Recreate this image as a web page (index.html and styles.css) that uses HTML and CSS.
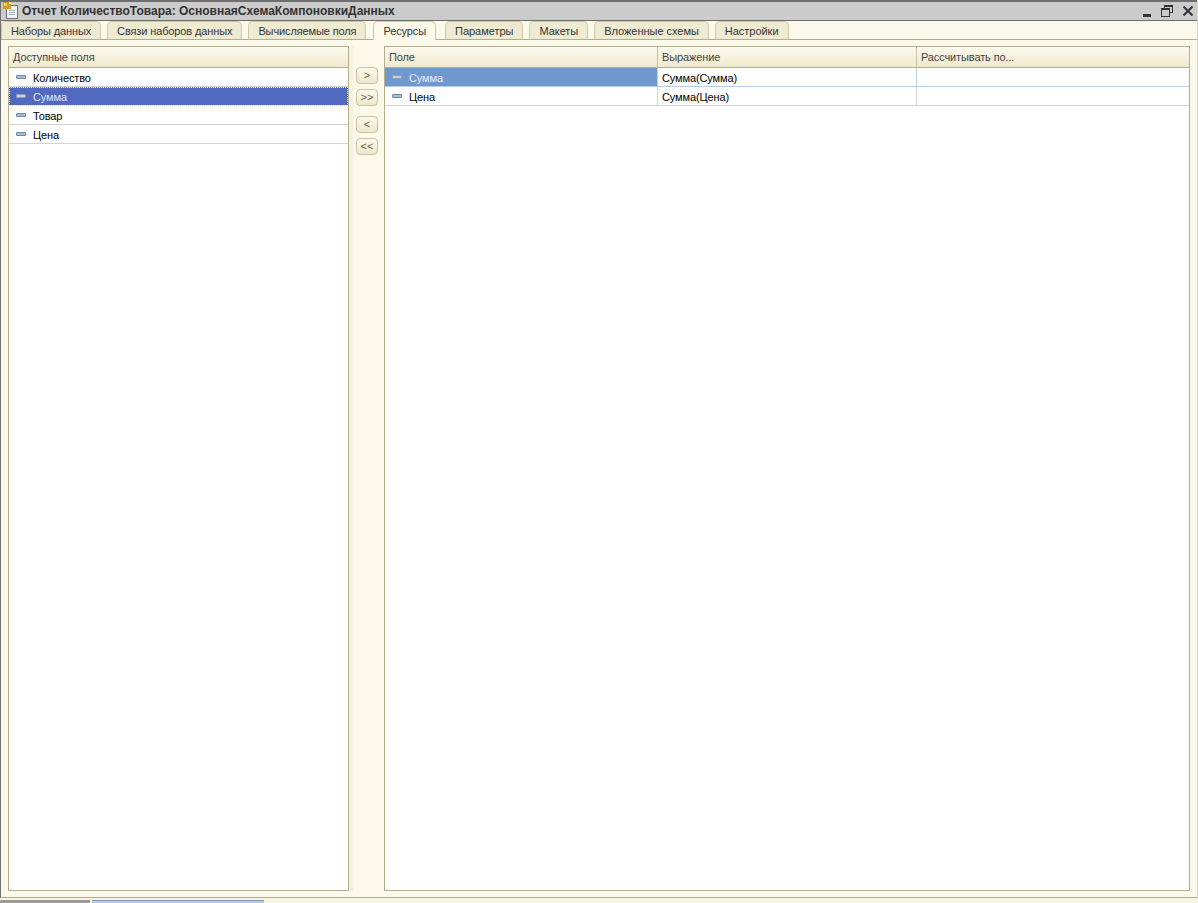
FILE: index.html
```html
<!DOCTYPE html>
<html lang="ru">
<head>
    <meta charset="UTF-8">
    <meta name="viewport" content="width=device-width, initial-scale=1.0">
    <title>Отчет КоличествоТовара</title>
    <link rel="stylesheet" href="styles.css">
</head>
<body>
    <div class="window">
        <div class="titlebar">
            <svg class="title-icon" width="18" height="18" viewBox="0 0 18 18">
                <rect x="4.500" y="3.500" width="11" height="13" fill="#eef3f8" stroke="#6b7480"/>
                <path d="M7 8.500h6M7 10.500h6M7 12.500h6" stroke="#a9b4c0"/>
                <rect x="1" y="0" width="8" height="7" fill="#d99a2b"/>
                <rect x="2" y="1" width="3" height="3" fill="#f4c95d"/>
                <rect x="7" y="0" width="2" height="2" fill="#fff6d8"/>
            </svg>
            <span class="title-text">Отчет КоличествоТовара: ОсновнаяСхемаКомпоновкиДанных</span>
            <div class="win-buttons">
                <svg width="8" height="11" viewBox="0 0 8 11"><rect x="0" y="8" width="8" height="3" fill="#333"/></svg>
                <svg width="12" height="12" viewBox="0 0 12 12" fill="none" stroke="#333">
                    <rect x="3.500" y="0.500" width="8" height="7"/>
                    <rect x="0.500" y="3.500" width="8" height="8" fill="#cbcbcb"/>
                    <path d="M1 4.500h7M4 1.500h7"/>
                </svg>
                <svg width="10" height="10" viewBox="0 0 10 10" fill="none" stroke="#333" stroke-width="2"><path d="M0.500 0.500l9 9M9.500 0.500l-9 9"/></svg>
            </div>
        </div>

        <div class="tabs">
            <div class="tab">Наборы данных</div>
            <div class="tab">Связи наборов данных</div>
            <div class="tab">Вычисляемые поля</div>
            <div class="tab active">Ресурсы</div>
            <div class="tab">Параметры</div>
            <div class="tab">Макеты</div>
            <div class="tab">Вложенные схемы</div>
            <div class="tab">Настройки</div>
        </div>

        <div class="content">
            <div class="panel fields-panel">
                <div class="head-row">
                    <div class="head-cell">Доступные поля</div>
                </div>
                <div class="row"><span class="cell field-cell"><i class="dash"></i>Количество</span></div>
                <div class="row current"><span class="cell field-cell"><i class="dash"></i>Сумма</span></div>
                <div class="row"><span class="cell field-cell"><i class="dash"></i>Товар</span></div>
                <div class="row"><span class="cell field-cell"><i class="dash"></i>Цена</span></div>
            </div>

            <div class="move-buttons">
                <button class="btn">&gt;</button>
                <button class="btn">&gt;&gt;</button>
                <button class="btn btn-gap">&lt;</button>
                <button class="btn">&lt;&lt;</button>
            </div>

            <div class="panel resources-panel">
                <div class="head-row cols">
                    <div class="head-cell">Поле</div>
                    <div class="head-cell">Выражение</div>
                    <div class="head-cell">Рассчитывать по...</div>
                </div>
                <div class="row cols first">
                    <span class="cell field-cell selected"><i class="dash"></i>Сумма</span>
                    <span class="cell">Сумма(Сумма)</span>
                    <span class="cell"></span>
                </div>
                <div class="row cols">
                    <span class="cell field-cell"><i class="dash"></i>Цена</span>
                    <span class="cell">Сумма(Цена)</span>
                    <span class="cell"></span>
                </div>
            </div>
        </div>
    </div>

    <div class="taskbar">
        <div class="task grey"></div>
        <div class="task blue"></div>
    </div>
</body>
</html>
```

FILE: styles.css
```css
* {
    box-sizing: border-box;
}
html, body {
    height: 100%;
}
body {
    margin: 0;
    display: flex;
    flex-direction: column;
    overflow: hidden;
    font-family: "Liberation Sans", Arial, sans-serif;
    font-size: 11px;
    letter-spacing: -0.12px;
    color: #000;
    background: #f5f3e1;
}
.window {
    height: 898px;
    display: flex;
    flex-direction: column;
    border-left: 1px solid #707070;
    border-right: 1px solid #d8d6c8;
    border-bottom: 1px solid #b5ae8c;
    background: #fbf9e9;
}
.titlebar {
    height: 21px;
    flex: none;
    display: flex;
    align-items: center;
    padding-left: 1px;
    background: #cbcbcb;
    border-top: 2px solid #6e6e6e;
    border-bottom: 1px solid #6e6e6e;
}
.title-icon {
    flex: none;
    margin-right: 2px;
}
.title-text {
    font-size: 12px;
    font-weight: bold;
    letter-spacing: 0;
    color: #333;
}
.win-buttons {
    margin-left: auto;
    display: flex;
    align-items: center;
    gap: 10px;
    padding-right: 4px;
}
.tabs {
    height: 19px;
    flex: none;
    display: flex;
    gap: 6px;
    background: #fbf9e9;
    border-bottom: 1px solid #b5ae8c;
}
.tab {
    height: 18px;
    padding: 3px 9px 0;
    background: #efebd2;
    border: 1px solid #cfc9a8;
    border-bottom: none;
    border-radius: 5px 5px 0 0;
    color: #333;
    white-space: nowrap;
}
.tab.active {
    height: 19px;
    margin-left: 1px;
    padding-top: 3px;
    background: #fbf9e9;
    border-color: #c9c3a2;
    border-top: 1px solid #e8c878;
    position: relative;
    z-index: 1;
}
.tab.active ~ .tab {
    letter-spacing: -0.03px;
}
.tab.active + .tab {
    margin-left: 3px;
}
.content {
    flex: 1;
    display: flex;
    padding: 6px 7px 6px 7px;
}
.panel {
    background: #fff;
    border: 1px solid #b5ae8c;
}
.fields-panel {
    width: 341px;
    flex: none;
}
.resources-panel {
    flex: 1;
}
.move-buttons {
    width: 35px;
    flex: none;
    display: flex;
    flex-direction: column;
    align-items: flex-start;
    gap: 5px;
    padding: 21px 0 0 7px;
    background: linear-gradient(to right, #f3f1df 0, #f3f1df 4px, #fbf9e9 5px);
}
.btn {
    width: 22px;
    height: 17px;
    padding: 0 0 2px;
    font-family: "Liberation Sans", Arial, sans-serif;
    font-size: 11px;
    color: #6a6040;
    background: linear-gradient(#fbf9ec, #ece7cd);
    border: 1px solid #c9c3a2;
    border-radius: 4px;
}
.btn-gap {
    margin-top: 5px;
}
.head-row {
    height: 21px;
    display: flex;
    background: linear-gradient(#fbf9ee, #f0e9cd);
    border-bottom: 1px solid #b5ae8c;
    color: #444;
}
.head-cell {
    padding: 4px 4px 0;
    border-right: 1px solid #c9c3a2;
    flex: 1;
}
.head-cell:last-child {
    border-right: none;
}
.row {
    height: 19px;
    display: flex;
    border-bottom: 1px solid #d4d4d4;
}
.cell {
    display: flex;
    align-items: center;
    padding: 2px 3px 0 4px;
    flex: 1;
    white-space: nowrap;
}
.field-cell {
    padding-left: 7px;
}
.dash {
    width: 10px;
    height: 4px;
    margin-right: 7px;
    margin-bottom: 3px;
    flex: none;
    background: #a5bdd4;
    border: 1px solid #6f8aa8;
    border-radius: 1px;
}
.row.current {
    background: #5169be;
    color: #dfe4f5;
    outline: 1px dotted #fff;
    outline-offset: -1px;
}
.row.current .dash,
.selected .dash {
    background: #c4cedc;
    border-color: #8ea0b8;
}
.cols > :nth-child(1) {
    flex: none;
    width: 273px;
}
.cols > :nth-child(2) {
    flex: none;
    width: 259px;
}
.cols .cell {
    border-right: 1px solid #d4d4d4;
}
.cols .cell:last-child {
    border-right: none;
}
.row.first {
    border-bottom-color: #b4cce6;
}
.row.first .cell {
    border-right-color: #b4cce6;
}
.selected {
    background: #6f98cf;
    color: #e6eef8;
}
.taskbar {
    flex: 1;
    display: flex;
    align-items: flex-end;
    gap: 2px;
}
.task {
    height: 3px;
}
.task.grey {
    width: 90px;
    background: #9a9a9a;
}
.task.blue {
    width: 172px;
    background: #b4cce6;
    border-top: 1px solid #7f9ab5;
}
```
